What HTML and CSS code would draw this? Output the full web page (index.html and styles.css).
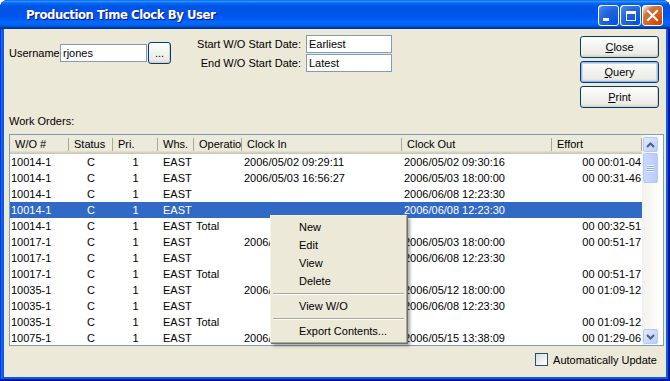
FILE: index.html
```html
<!doctype html>
<html>
    <head>
        <meta charset=utf-8>
        <title>Production Time Clock By User</title>
        <link rel="stylesheet" href="styles.css">
    </head>
    <body>
        <div class="window">
            <div class="titlebar">
                <span class="title">Production Time Clock By User</span>
                <div class="title-buttons">
                    <span class="tb tb-min"><span class="min-bar"></span></span>
                    <span class="tb tb-max"><span class="max-box"></span></span>
                    <span class="tb tb-close">
                        <svg width="13" height="13" viewBox="0 0 13 13"><path d="M2 2 L11 11 M11 2 L2 11" stroke="#fff" stroke-width="2.2" stroke-linecap="square"/></svg>
                    </span>
                </div>
            </div>

            <div class="client">
                <div class="top">
                    <div class="user-group">
                        <label class="user-label">Username:</label>
                        <input class="field user-field" value="rjones">
                        <button class="btn btn-dots">...</button>
                    </div>
                    <div class="date-group">
                        <label>Start W/O Start Date:</label>
                        <input class="field date-field" value="Earliest">
                        <label>End W/O Start Date:</label>
                        <input class="field date-field" value="Latest">
                    </div>
                    <div></div>
                    <div class="actions">
                        <button class="btn"><u>C</u>lose</button>
                        <button class="btn btn-focus"><u>Q</u>uery</button>
                        <button class="btn"><u>P</u>rint</button>
                    </div>
                </div>

                <div class="section-label">Work Orders:</div>

                <div class="list">
                    <div class="list-view">
                        <table class="orders">
                            <colgroup>
                                <col style="width:59px"><col style="width:44px"><col style="width:45px"><col style="width:36px">
                                <col style="width:48px"><col style="width:160px"><col style="width:150px"><col style="width:90px">
                            </colgroup>
                            <thead>
                                <tr>
                                    <th>W/O #</th><th>Status</th><th>Pri.</th><th>Whs.</th>
                                    <th>Operation</th><th>Clock In</th><th>Clock Out</th><th>Effort</th>
                                </tr>
                            </thead>
                            <tbody>
                                <tr><td>10014-1</td><td class="c">C</td><td class="c">1</td><td class="w">EAST</td><td></td><td>2006/05/02 09:29:11</td><td>2006/05/02 09:30:16</td><td class="r">00 00:01-04</td></tr>
                                <tr><td>10014-1</td><td class="c">C</td><td class="c">1</td><td class="w">EAST</td><td></td><td>2006/05/03 16:56:27</td><td>2006/05/03 18:00:00</td><td class="r">00 00:31-46</td></tr>
                                <tr><td>10014-1</td><td class="c">C</td><td class="c">1</td><td class="w">EAST</td><td></td><td></td><td>2006/06/08 12:23:30</td><td class="r"></td></tr>
                                <tr class="selected"><td>10014-1</td><td class="c">C</td><td class="c">1</td><td class="w">EAST</td><td></td><td></td><td>2006/06/08 12:23:30</td><td class="r"></td></tr>
                                <tr><td>10014-1</td><td class="c">C</td><td class="c">1</td><td class="w">EAST</td><td>Total</td><td></td><td></td><td class="r">00 00:32-51</td></tr>
                                <tr><td>10017-1</td><td class="c">C</td><td class="c">1</td><td class="w">EAST</td><td></td><td>2006/05/03 17:08:53</td><td>2006/05/03 18:00:00</td><td class="r">00 00:51-17</td></tr>
                                <tr><td>10017-1</td><td class="c">C</td><td class="c">1</td><td class="w">EAST</td><td></td><td></td><td>2006/06/08 12:23:30</td><td class="r"></td></tr>
                                <tr><td>10017-1</td><td class="c">C</td><td class="c">1</td><td class="w">EAST</td><td>Total</td><td></td><td></td><td class="r">00 00:51-17</td></tr>
                                <tr><td>10035-1</td><td class="c">C</td><td class="c">1</td><td class="w">EAST</td><td></td><td>2006/05/12 16:50:48</td><td>2006/05/12 18:00:00</td><td class="r">00 01:09-12</td></tr>
                                <tr><td>10035-1</td><td class="c">C</td><td class="c">1</td><td class="w">EAST</td><td></td><td></td><td>2006/06/08 12:23:30</td><td class="r"></td></tr>
                                <tr><td>10035-1</td><td class="c">C</td><td class="c">1</td><td class="w">EAST</td><td>Total</td><td></td><td></td><td class="r">00 01:09-12</td></tr>
                                <tr><td>10075-1</td><td class="c">C</td><td class="c">1</td><td class="w">EAST</td><td></td><td>2006/05/15 12:09:03</td><td>2006/05/15 13:38:09</td><td class="r">00 01:29-06</td></tr>
                            </tbody>
                        </table>
                    </div>
                    <div class="scrollbar">
                        <span class="sb-btn">
                            <svg width="9" height="6" viewBox="0 0 9 6"><path d="M1 5 L4.5 1.5 L8 5" fill="none" stroke="#4d6185" stroke-width="2"/></svg>
                        </span>
                        <span class="sb-thumb"><span class="grip"></span></span>
                        <span class="sb-track"></span>
                        <span class="sb-btn">
                            <svg width="9" height="6" viewBox="0 0 9 6"><path d="M1 1 L4.5 4.5 L8 1" fill="none" stroke="#4d6185" stroke-width="2"/></svg>
                        </span>
                    </div>
                </div>

                <div class="bottom">
                    <label class="check"><span class="check-box"></span>Automatically Update</label>
                </div>
            </div>

            <div class="menu">
                <div class="menu-item">New</div>
                <div class="menu-item">Edit</div>
                <div class="menu-item">View</div>
                <div class="menu-item">Delete</div>
                <div class="menu-sep"></div>
                <div class="menu-item">View W/O</div>
                <div class="menu-sep"></div>
                <div class="menu-item">Export Contents...</div>
            </div>
        </div>
    </body>
</html>
```

FILE: styles.css
```css
* {
    box-sizing: border-box;
}

body {
    margin: 0;
    font-family: "Liberation Sans", Arial, sans-serif;
    font-size: 11px;
    color: #000;
    background: #fff;
}

.window {
    position: relative;
    width: 670px;
    height: 381px;
    display: flex;
    flex-direction: column;
    background: #0a5bec;
    border-radius: 8px 8px 0 0;
    overflow: hidden;
    box-shadow: inset -1px -1px #00138c, inset 1px 1px #0831d9, inset -2px -2px #001ea0, inset 2px 2px #166aee;
}

/* title bar */
.titlebar {
    height: 29px;
    display: flex;
    align-items: center;
    padding: 0 7px 0 26px;
    background: linear-gradient(to bottom, #0058ee 0%, #3593ff 4%, #288eff 6%, #127dff 8%, #036ffc 10%, #0262ee 14%, #0057e5 20%, #0054e3 24%, #0055eb 56%, #005bf5 66%, #026afe 76%, #0062ef 86%, #0052d6 92%, #0040ab 94%, #003092 100%);
}

.title {
    flex: 1;
    color: #fff;
    font-family: "DejaVu Sans", sans-serif;
    font-stretch: condensed;
    font-weight: bold;
    font-size: 13px;
    letter-spacing: -0.45px;
    text-shadow: 1px 1px #0f1089;
}

.title-buttons {
    display: flex;
    gap: 1px;
    margin-top: 2px;
}

.tb {
    position: relative;
    display: flex;
    align-items: center;
    justify-content: center;
    width: 21px;
    height: 21px;
    border: 1px solid #fff;
    border-radius: 3px;
    background: radial-gradient(circle at 90% 90%, #0054e9 0%, #2263d5 55%, #4480f4 90%, #fff 100%);
}

.tb-close {
    background: radial-gradient(circle at 90% 90%, #cc4600 0%, #dc6527 55%, #cd7546 70%, #fff 100%);
}

.min-bar {
    position: absolute;
    left: 4px;
    bottom: 4px;
    width: 6px;
    height: 3px;
    background: #fff;
}

.max-box {
    width: 10px;
    height: 10px;
    border: 1px solid #fff;
    border-top-width: 3px;
}

/* client area */
.client {
    flex: 1;
    margin: 0 4px 4px;
    background: #ece9d8;
    display: flex;
    flex-direction: column;
}

.top {
    display: grid;
    grid-template-columns: 167px 216px 1fr 79px;
    height: 86px;
    padding: 6px 7px 0 5px;
    align-items: start;
}

.user-group {
    display: flex;
    align-items: center;
    margin-top: 7px;
}

.user-label {
    width: 51px;
}

.field {
    font-family: "Liberation Sans", Arial, sans-serif;
    font-size: 11px;
    color: #000;
    background: #fff;
    border: 1px solid #7f9db9;
    padding: 0 2px;
    margin: 0;
    outline: none;
}

.user-field {
    width: 87px;
    height: 18px;
}

.btn-dots {
    width: 23px;
    height: 21px;
    margin-left: 1px;
}

.date-group {
    justify-self: end;
    display: grid;
    grid-template-columns: auto 86px;
    column-gap: 5px;
    row-gap: 1px;
    align-items: center;
    text-align: right;
}

.date-field {
    height: 18px;
}

.actions {
    display: flex;
    flex-direction: column;
    gap: 3px;
    margin-top: 1px;
}

.btn {
    font-family: "Liberation Sans", Arial, sans-serif;
    font-size: 11px;
    color: #000;
    height: 22px;
    padding: 0;
    border: 1px solid #003c74;
    border-radius: 3px;
    background: linear-gradient(to bottom, #fff 0%, #f4f4f0 40%, #ecebe6 85%, #d6d0c5 100%);
    box-shadow: inset -1px -1px #d8d2c6;
}

.btn-focus {
    box-shadow: inset 0 0 0 1px #98b8ea, inset 0 0 0 2px #c4d8f8;
}

.section-label {
    height: 13px;
    line-height: 13px;
    padding-left: 5px;
    margin-bottom: 6px;
}

/* list view */
.list {
    display: flex;
    margin: 0 2px 0 5px;
    height: 212px;
    border: 1px solid #7f9db9;
    background: #fff;
    overflow: hidden;
}

.list-view {
    width: 632px;
    overflow: hidden;
}

.orders {
    width: 632px;
    table-layout: fixed;
    border-collapse: collapse;
}

.orders th {
    height: 19px;
    padding: 0 0 1px 5px;
    font-weight: normal;
    text-align: left;
    white-space: nowrap;
    overflow: hidden;
    background: linear-gradient(to right, #aca899, #aca899) no-repeat right 3px / 1px 13px, #ebeadb;
    box-shadow: inset 0 -1px #cbc7b8, inset 0 -2px #d6d2c2, inset 0 -3px #e2dec8;
}

.orders td {
    height: 16px;
    padding: 0 2px;
    line-height: 16px;
    white-space: nowrap;
    overflow: hidden;
}

.orders td:first-child {
    padding-left: 1px;
}

.orders td.c {
    text-align: center;
}

.orders td.w {
    padding-left: 5px;
}

.orders td.r {
    text-align: right;
    padding-right: 1px;
}

.orders tr.selected td {
    background: #316ac5;
    color: #fff;
}

.scrollbar {
    width: 17px;
    display: flex;
    flex-direction: column;
    align-items: center;
    padding: 2px 0 1px;
    gap: 1px;
    background: linear-gradient(to right, #f3f1ec, #fefefb);
}

.sb-btn {
    display: flex;
    align-items: center;
    justify-content: center;
    width: 15px;
    height: 15px;
    border: 1px solid #b5c9f5;
    border-radius: 2px;
    background: linear-gradient(to bottom right, #e1eafe, #b9cdfa);
}

.sb-thumb {
    display: flex;
    align-items: center;
    justify-content: center;
    width: 15px;
    height: 30px;
    border: 1px solid #b5c9f5;
    border-radius: 2px;
    background: linear-gradient(to right, #c9d8fc, #b9cbf9);
}

.grip {
    width: 7px;
    height: 7px;
    background: repeating-linear-gradient(to bottom, #eef4fe 0 1px, #8cb0f8 1px 2px);
}

.sb-track {
    flex: 1;
}

/* bottom row */
.bottom {
    display: flex;
    justify-content: flex-end;
    padding: 7px 9px 0 0;
}

.check {
    display: flex;
    align-items: center;
    gap: 5px;
    height: 13px;
}

.check-box {
    width: 13px;
    height: 13px;
    border: 1px solid #1c5180;
    background: linear-gradient(to bottom right, #dcdcd7, #fff);
}

/* context menu */
.menu {
    position: absolute;
    left: 270px;
    top: 215px;
    width: 137px;
    padding: 2px 1px;
    background: #ece9d8;
    border: 1px solid;
    border-color: #f4f3ee #aca899 #aca899 #f4f3ee;
    box-shadow: 1px 1px 0 #716f64, 3px 3px 3px rgba(0, 0, 0, 0.35);
}

.menu-item {
    height: 18px;
    line-height: 18px;
    padding-left: 27px;
    white-space: nowrap;
}

.menu-sep {
    height: 7px;
    margin: 0 1px;
    background: linear-gradient(#aca899, #aca899) no-repeat 0 3px / 100% 1px, linear-gradient(#fff, #fff) no-repeat 0 4px / 100% 1px;
}
```
